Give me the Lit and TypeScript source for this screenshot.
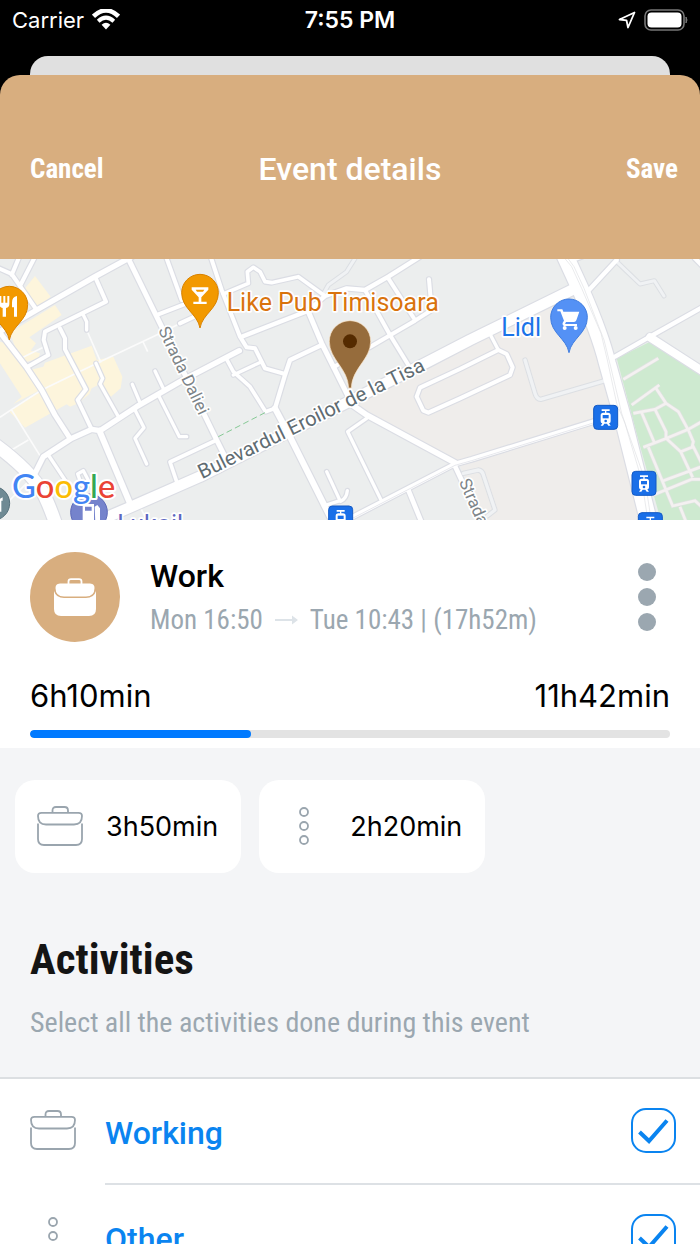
import { LitElement, html, css, svg } from "lit";
import { customElement, property, state } from "lit/decorators.js";

type IconName = "case" | "dots";

/* ------------------------------------------------------------------ icons */

const caseIcon = html`<svg viewBox="0 0 46 40" width="46" height="40" fill="none" stroke="currentColor" stroke-width="1.8" aria-hidden="true">
  <path d="M15.500 6.500V4.500Q15.500 1 19 1H27.500Q31 1 31 4.500V6.500" />
  <path d="M4.500 6.800H41.500Q45 6.800 45 10Q45 18.500 37 18.500H9Q1 18.500 1 10Q1 6.800 4.500 6.800Z" />
  <path d="M1 17.500V33Q1 39 7 39H39Q45 39 45 33V17.500" />
</svg>`;

const dotsIcon = html`<svg viewBox="0 0 46 40" width="46" height="40" fill="none" stroke="currentColor" stroke-width="1.8" aria-hidden="true">
  <circle cx="23" cy="6" r="4" /><circle cx="23" cy="20" r="4" /><circle cx="23" cy="34" r="4" />
</svg>`;

const icons: Record<IconName, unknown> = { case: caseIcon, dots: dotsIcon };

/* -------------------------------------------------------------------- map */

interface Road {
  d: string;
  w: number;
}

const roads: Road[] = [
  { w: 16, d: "M-10 220L110 150L285 50L395 -10" },
  { w: 15, d: "M382 -10L480 190L650 540L680 600" },
  { w: 12, d: "M105 -10L60 78M58 -10L35 45M-10 22L35 42L60 78L110 150" },
  { w: 12, d: "M285 50L318 125L135 215L131 240L145 285L80 322" },
  { w: 15, d: "M-10 205L80 322L125 390L165 465L210 535" },
  { w: 12, d: "M180 205L195 235L195 268L225 325L258 388L233 420L275 508" },
  { w: 10, d: "M250 165L260 185V210M288 310L308 355L300 372L355 470" },
  { w: 16, d: "M100 650L130 590L215 535L275 508L300 512L410 440L540 365L718 272" },
  { w: 11, d: "M680 298L700 335L750 380L797 455L825 445" },
  { w: 12, d: "M475 163L560 130M540 190L600 162M498 -10L545 120" },
  { w: 12, d: "M632 -10L665 90L720 230L740 262L765 265L795 325L855 342" },
  { w: 11, d: "M670 102L745 70L742 35L760 22L780 35L795 65L815 68L895 50L975 108" },
  { w: 10, d: "M465 333L492 390M397 373L420 428M475 405L538 530H560M405 450L432 503L405 535L440 612" },
  { w: 18, d: "M298 512L390 730" },
  { w: 11, d: "M650 540L510 606L530 665" },
  { w: 10, d: "M145 585L215 690M245 675L233 642L250 632L275 680" },
  { w: 13, d: "M1260 -10L1165 50L1095 90L1040 85L975 108L925 152L725 230" },
  { w: 15, d: "M925 155L965 250L1000 320L1045 410" },
  { w: 17, d: "M1050 430L1100 465L1365 608" },
  { w: 13, d: "M965 255L870 300L855 345L825 445" },
  { w: 18, d: "M825 445L865 520L990 770" },
  { w: 10, d: "M700 345L785 305" },
  { w: 12, d: "M1098 95L1170 225L1225 315M1165 55L1245 180M1287 58L1295 150L1245 182L1115 258L1000 322" },
  { w: 12, d: "M1380 327L1260 383L1250 410L1270 452L1285 458L1380 415L1530 345L1538 322L1520 282L1495 270Z" },
  { w: 10, d: "M1470 222L1495 270" },
  { w: 10, d: "M1100 475L1043 515L1142 718M980 635L1020 722L970 738M1042 692Q1040 715 1022 724" },
  { w: 14, d: "M1040 780L1365 612L1415 598L1780 485L1860 465" },
  { w: 14, d: "M1225 690L1270 800M1362 612L1450 800" },
  { w: 32, d: "M220 815L390 742L600 650L1275 310L1410 240L1720 88" },
  { w: 38, d: "M-20 550Q90 630 130 700Q150 740 170 800" },
  { w: 13, d: "M1730 -5L1770 -20M1850 0L1765 92M1845 290L1950 230L2110 140M2085 -5L2110 20" },
  { w: 24, d: "M1950 232L2110 335" },
  { w: 50, d: "M1692 -20L1740 85Q1800 220 1822 310L1870 480L1950 800" },
];

const laneRoads: Road[] = [
  { w: 9, d: "M1065 -5L1040 35L985 75L970 102" },
  { w: 9, d: "M1850 5L1920 72L1963 62L1992 108" },
  { w: 10, d: "M1575 300L1605 400Q1610 418 1622 418L1815 362" },
  { w: 10, d: "M1390 640L1435 630Q1447 632 1450 645L1485 750L1462 768" },
];

const footpaths =
  "M0 472L40 445L125 390L300 305L470 225L545 188M35 450L125 595M0 590L85 540M60 296L130 262M260 210L303 308M428 243L443 275M0 750L100 650M420 740L445 790";

const parkPaths =
  "M1870 358L1975 295M1895 435L1978 375M1900 460L1965 448L1998 430M1965 380L1998 430L2035 455L2065 510L2080 545L2075 565M1925 458L1962 545M1965 448L1998 515V535M1930 562L2000 535L2065 508L2110 482M1998 535L2042 575L2080 560L2110 620M2042 575L2078 652M1945 562L2018 738L2085 722L2110 745M1990 662L2110 618M1960 705L2075 658H2110M2040 740L2060 790";

const tram = (x: number, y: number) => svg`
  <g transform="translate(${x} ${y})">
    <rect width="72" height="72" rx="11" fill="#1a6fe8" stroke="#1259c4" stroke-width="3" />
    <path fill="#fff" d="M24 12H48V17H38V22H43Q51 22 51 30V48Q51 54 46 54L51 61H44L40 55H32L28 61H21L26 54Q21 54 21 48V30Q21 22 29 22H34V17H24Z" />
    <path fill="#1a6fe8" d="M27 29H45V39H27Z" />
    <circle cx="36" cy="47" r="4" fill="#1a6fe8" />
  </g>`;

const pinPath = "M0 0C-7 -42 -55 -58 -55 -106A55 55 0 0 1 55 -106C55 -58 7 -42 0 0Z";

const mapArt = svg`
  <rect y="-3" width="2100" height="783" fill="#eceeee" />
  <path fill="#efedeb" d="M1050 440L1245 330L1710 100L1830 320L1960 790H1460L1375 606Z" />
  <path fill="#ceead0" d="M1850 295L1950 245L2100 345V790H1985L1915 540Z" />
  <path fill="#fdf5dc" d="M105 48L152 110L110 145L75 85ZM30 218L165 135L185 165L88 232L108 250L92 272L120 280L115 296L70 308L45 260ZM0 245L22 250L120 390L40 432L65 410L0 310ZM90 330L130 320L135 308L275 257L290 300L340 290L367 350L362 385L333 410L300 372L275 385L268 402L235 430L210 440L200 433L75 503L28 455L120 395Z" />
  <path d=${parkPaths} fill="none" stroke="#dfe3e0" stroke-width="12" />
  <path d=${parkPaths} fill="none" stroke="#f4f1f1" stroke-width="8" />
  <path d=${footpaths} fill="none" stroke="#fbfbfb" stroke-width="5" />
  <g fill="none" stroke-linejoin="round" stroke-linecap="round">
    ${laneRoads.map((r) => svg`<path d=${r.d} stroke="#dcdfe3" stroke-width=${r.w + 6} />`)}
    ${roads.map((r) => svg`<path d=${r.d} stroke="#dbdde4" stroke-width=${r.w + 7} />`)}
    ${laneRoads.map((r) => svg`<path d=${r.d} stroke="#f0f2f4" stroke-width=${r.w} />`)}
    ${roads.map((r) => svg`<path d=${r.d} stroke="#fff" stroke-width=${r.w} />`)}
    <path d="M1690 -10L1715 20L1745 85L1803 220L1822 300L1850 430L1875 490L1925 660L1945 790M1700 -10L1722 20L1752 85L1812 240L1832 320L1865 460L1882 510L1935 660L1955 790" stroke="#e0e1e4" stroke-width="2" />
    <path d="M1040 784L1365 616L1415 602L1780 489" stroke="#dbdde4" stroke-width="2" />
    <path d="M655 530L795 458" stroke="#86c995" stroke-width="3" stroke-dasharray="18 10" stroke-linecap="butt" />
  </g>

  <g class="place" stroke="#fff" stroke-width="10" stroke-linejoin="round" paint-order="stroke">
    <text x="474" y="210" font-size="51" fill="#7d8488" transform="rotate(64.500 474 210)">Strada Daliei</text>
    <text x="1376" y="665" font-size="51" fill="#7d8488" transform="rotate(66 1376 665)">Strada</text>
    <text x="606" y="658" font-size="61" fill="#5f6c72" transform="rotate(-26 606 658)">Bulevardul Eroilor de la Tisa</text>
    <text x="680" y="154" font-size="75" fill="#d9730d">Like Pub Timisoara</text>
    <text x="1504" y="228" font-size="75" fill="#1a73e8">Lidl</text>
    <text x="352" y="818" font-size="75" fill="#5c66c0">Lukoil</text>
  </g>

  ${tram(1781, 436)}
  ${tram(1896, 634)}
  ${tram(1915, 758)}
  ${tram(986, 738)}

  <g transform="translate(28 240)">
    <path d=${pinPath} fill="#f29900" stroke="#d98200" stroke-width="3" />
    <path fill="#fff" d="M-30 -132H-24V-112H-18V-132H-12V-112H-6V-132H0V-108Q0 -98 -10 -96V-70H-20V-96Q-30 -98 -30 -108ZM8 -112Q8 -130 23 -132V-70H14V-98H8Z" />
  </g>
  <g transform="translate(600 204)">
    <path d=${pinPath} fill="#f29900" stroke="#d98200" stroke-width="3" />
    <path fill="#fff" fill-rule="evenodd" d="M-25 -122H25V-115L4 -92V-79H20V-72H-20V-79H-4V-92L-25 -115ZM-13 -115L-9 -109H9L13 -115Z" />
  </g>
  <g transform="translate(1707 278)">
    <path d=${pinPath} fill="#5491f5" stroke="#3f7de0" stroke-width="3" />
    <path fill="#fff" d="M-35 -130H-20L-17 -123H31L22 -97Q20 -92 15 -92H-9L-12 -86H24V-80H-15Q-22 -84 -18 -91L-15 -96L-26 -124H-35Z" />
    <circle cx="-13" cy="-74" r="6" fill="#fff" /><circle cx="20" cy="-74" r="6" fill="#fff" />
  </g>
  <g transform="translate(1050 384)">
    <path d="M-4 0C-6 -60 -62 -85 -62 -140A62 62 0 0 1 62 -140C62 -85 6 -60 4 0Z" fill="#966c3c" stroke="#fbe3c4" stroke-width="2" />
    <circle cy="-140" r="21" fill="#552b00" />
  </g>

  <circle cx="-22" cy="730" r="51" fill="#6f8a94" stroke="#56717c" stroke-width="3" />
  <path fill="#fff" d="M-10 722L8 712V722H4V755H-4V730H-10Z" />
  <circle cx="267" cy="757" r="55" fill="#7583cc" stroke="#5c69b8" stroke-width="3" />
  <path fill="#fff" fill-rule="evenodd" d="M248 732H282V780H248ZM255 740H275V752H255ZM284 740L292 735L300 745V790H286Z" />

  <text class="brand" x="36" y="713" font-size="98" stroke="#fff" stroke-width="12" stroke-linejoin="round" paint-order="stroke"><tspan fill="#4285f4">G</tspan><tspan fill="#ea4335">o</tspan><tspan fill="#fbbc05">o</tspan><tspan fill="#4285f4">g</tspan><tspan fill="#34a853">l</tspan><tspan fill="#ea4335">e</tspan></text>
`;

@customElement("event-map")
export class EventMap extends LitElement {
  static styles = css`
    :host {
      display: block;
    }
    .map {
      display: block;
      width: 100%;
      height: 261px;
    }
    .place {
      font-family: Roboto, sans-serif;
    }
    .brand {
      font-family: Lato, sans-serif;
      font-weight: 500;
    }
  `;

  render() {
    return html`<svg class="map" viewBox="0 -3 2100 783" preserveAspectRatio="xMidYMid slice" role="img" aria-label="Map of the event location">
      ${mapArt}
    </svg>`;
  }
}

/* --------------------------------------------------------------- activity */

@customElement("activity-row")
export class ActivityRow extends LitElement {
  static styles = css`
    :host {
      display: block;
      background: #fff;
    }
    .row {
      display: flex;
      gap: 29px;
      padding-left: 30px;
      cursor: pointer;
    }
    .icon {
      display: flex;
      align-items: center;
      height: 102px;
      color: #9aa5ae;
    }
    .body {
      flex: 1;
      display: flex;
      align-items: center;
      justify-content: space-between;
      box-sizing: border-box;
      height: 106px;
      padding: 0 24px 2px 0;
      border-bottom: 2px solid #dde1e5;
    }
    .name {
      padding-top: 6px;
      font: 500 32px/40px Roboto, sans-serif;
      color: #0a84f0;
    }
    .tick {
      display: grid;
    }
    .box,
    .mark {
      grid-area: 1 / 1;
      width: 45px;
      height: 45px;
    }
    .box {
      appearance: none;
      box-sizing: border-box;
      margin: 0;
      border: 2px solid #0a84f0;
      border-radius: 15px;
      background: #fff;
    }
    .mark {
      pointer-events: none;
      visibility: hidden;
    }
    .box:checked + .mark {
      visibility: visible;
    }
  `;

  @property() name = "";
  @property() icon: IconName = "case";
  @property({ type: Boolean }) checked = false;

  render() {
    return html`<label class="row">
      <span class="icon">${icons[this.icon]}</span>
      <span class="body">
        <span class="name">${this.name}</span>
        <span class="tick">
          <input class="box" type="checkbox" .checked=${this.checked} />
          <svg class="mark" viewBox="0 0 45 45" fill="none" stroke="#0a84f0" stroke-width="4" aria-hidden="true">
            <path d="M8.500 24L18 33L36 12.500" />
          </svg>
        </span>
      </span>
    </label>`;
  }
}

/* -------------------------------------------------------------------- app */

@customElement("app-root")
export class AppRoot extends LitElement {
  static styles = css`
    :host {
      display: flex;
      flex-direction: column;
      height: 100vh;
      overflow: hidden;
      background: #000;
      color: #000;
      font-family: Roboto, sans-serif;
    }
    .status {
      display: grid;
      grid-template-columns: 1fr auto 1fr;
      align-items: center;
      height: 39px;
      padding: 0 12px;
      margin-bottom: 17px;
      color: #fff;
      font: 400 22px/28px Inter, sans-serif;
    }
    .carrier,
    .indicators {
      display: flex;
      align-items: center;
      gap: 8px;
    }
    .indicators {
      justify-content: flex-end;
    }
    .clock {
      font-size: 23px;
      font-weight: 600;
    }
    .behind {
      flex: none;
      height: 19px;
      margin: 0 30px;
      border-radius: 18px 18px 0 0;
      background: #e0e0e0;
    }
    .sheet {
      flex: 1;
      min-height: 0;
      overflow-y: auto;
      scrollbar-width: none;
      border-radius: 20px 20px 0 0;
      background: #f4f5f7;
    }
    .bar {
      display: grid;
      grid-template-columns: 1fr auto 1fr;
      align-items: center;
      box-sizing: border-box;
      height: 184px;
      padding: 3px 22px 0;
      background: #d8ae7f;
      color: #fff;
    }
    .title {
      margin: 0;
      font: 500 32px/40px Roboto, sans-serif;
    }
    .action {
      padding: 0;
      border: 0;
      background: none;
      color: inherit;
      font: 700 27px/36px "Roboto Condensed", Roboto, sans-serif;
    }
    .action.start {
      margin-left: 8px;
      justify-self: start;
    }
    .action.end {
      justify-self: end;
    }
    .summary {
      padding: 32px 30px 10px;
      background: #fff;
    }
    .event {
      display: flex;
      align-items: center;
      gap: 30px;
    }
    .avatar {
      display: flex;
      align-items: center;
      justify-content: center;
      width: 90px;
      height: 90px;
      border-radius: 50%;
      background: #d8ae7f;
    }
    .facts {
      flex: 1;
      padding-top: 2px;
    }
    .kind {
      margin: 0;
      font: 500 32px/44px Roboto, sans-serif;
    }
    .when {
      display: flex;
      align-items: center;
      gap: 12px;
      margin: 0;
      color: #9ba7b0;
      font: 400 27px/44px "Roboto Condensed", Roboto, sans-serif;
    }
    .more {
      display: flex;
      padding: 0 14px;
      border: 0;
      background: none;
    }
    .totals {
      display: flex;
      justify-content: space-between;
      margin-top: 34px;
      font: 400 31px/40px Inter, sans-serif;
    }
    .progress {
      display: block;
      appearance: none;
      width: 100%;
      height: 8px;
      margin-top: 14px;
      border: 0;
      border-radius: 4px;
      overflow: hidden;
      background: #e3e3e3;
    }
    .progress::-webkit-progress-bar {
      background: #e3e3e3;
    }
    .progress::-webkit-progress-value {
      border-radius: 4px;
      background: #007aff;
    }
    .chips {
      display: flex;
      gap: 18px;
      padding: 32px 15px;
    }
    .chip {
      display: flex;
      align-items: center;
      gap: 23px;
      height: 93px;
      padding: 0 23px 0 22px;
      border-radius: 20px;
      background: #fff;
      font: 400 27px/36px Inter, sans-serif;
    }
    .chip-icon {
      display: flex;
      padding-bottom: 2px;
      color: #9aa5ae;
    }
    .intro {
      padding: 28px 30px 36px;
      border-bottom: 2px solid #dcdfe2;
    }
    .heading {
      margin: 0;
      color: #141414;
      font: 700 43px/52px "Roboto Condensed", Roboto, sans-serif;
    }
    .hint {
      margin: 20px 0 0;
      color: #9ba7b0;
      font: 400 28px/36px "Roboto Condensed", Roboto, sans-serif;
    }
  `;

  @state() private activities: { name: string; icon: IconName }[] = [
    { name: "Working", icon: "case" },
    { name: "Other", icon: "dots" },
  ];

  @state() private shares: { time: string; icon: IconName }[] = [
    { time: "3h50min", icon: "case" },
    { time: "2h20min", icon: "dots" },
  ];

  render() {
    return html`
      <div class="status">
        <span class="carrier">
          Carrier
          <svg width="28" height="21" viewBox="0 0 28 21" fill="none" stroke="#fff" aria-hidden="true">
            <path d="M1.500 7.300Q14 -4.500 26.500 7.300" stroke-width="4.500" />
            <path d="M6.200 12.200Q14 5.200 21.800 12.200" stroke-width="4" />
            <path d="M9.600 15.800Q14 11.800 18.400 15.800L14 20.500Z" fill="#fff" stroke="none" />
          </svg>
        </span>
        <span class="clock">7:55 PM</span>
        <span class="indicators">
          <svg width="18" height="18" viewBox="0 0 18 18" fill="none" stroke="#fff" stroke-width="1.800" stroke-linejoin="round" aria-hidden="true">
            <path d="M16.500 1.500L1.500 8.500L8.500 9.300L10 16.500Z" />
          </svg>
          <svg width="44" height="22" viewBox="0 0 44 22" aria-hidden="true">
            <rect x="1" y="1" width="39" height="20" rx="6" fill="none" stroke="#777" stroke-width="1.600" />
            <rect x="3.500" y="3.500" width="34" height="15" rx="4" fill="#fff" />
            <path d="M42 8Q44 11 42 14Z" fill="#777" stroke="#777" />
          </svg>
        </span>
      </div>
      <div class="behind"></div>
      <main class="sheet">
        <header class="bar">
          <button class="action start">Cancel</button>
          <h1 class="title">Event details</h1>
          <button class="action end">Save</button>
        </header>
        <event-map></event-map>
        <section class="summary">
          <div class="event">
            <span class="avatar">
              <svg width="42" height="38" viewBox="0 0 42 38" aria-hidden="true">
                <path d="M14.500 6V3.500Q14.500 1.200 17 1.200H25Q27.500 1.200 27.500 3.500V6" fill="none" stroke="#fff" stroke-width="1.800" />
                <path d="M6 5.500H36Q40.500 5.500 40.500 10Q40.500 18.500 32 18.500H10Q1.500 18.500 1.500 10Q1.500 5.500 6 5.500Z" fill="#fff" />
                <path d="M0 13Q2 20 10 20H32Q40 20 42 13V31Q42 38 35 38H7Q0 38 0 31Z" fill="#fff" />
              </svg>
            </span>
            <div class="facts">
              <h2 class="kind">Work</h2>
              <p class="when">
                <span>Mon 16:50</span>
                <svg width="23" height="10" viewBox="0 0 23 10" fill="#dde3e8" aria-hidden="true">
                  <path d="M0 4H17V0.500L23 5L17 9.500V6H0Z" />
                </svg>
                <span>Tue 10:43 | (17h52m)</span>
              </p>
            </div>
            <button class="more" aria-label="More options">
              <svg width="18" height="68" viewBox="0 0 18 68" fill="#9ba7b0" aria-hidden="true">
                <circle cx="9" cy="9" r="9" /><circle cx="9" cy="34" r="9" /><circle cx="9" cy="59" r="9" />
              </svg>
            </button>
          </div>
          <div class="totals"><span>6h10min</span><span>11h42min</span></div>
          <progress class="progress" value="370" max="1072" aria-label="Assigned time"></progress>
        </section>
        <div class="chips">
          ${this.shares.map(
            (s) => html`<div class="chip"><span class="chip-icon">${icons[s.icon]}</span><span>${s.time}</span></div>`,
          )}
        </div>
        <section class="intro">
          <h2 class="heading">Activities</h2>
          <p class="hint">Select all the activities done during this event</p>
        </section>
        ${this.activities.map((a) => html`<activity-row name=${a.name} icon=${a.icon} checked></activity-row>`)}
      </main>
    `;
  }
}
